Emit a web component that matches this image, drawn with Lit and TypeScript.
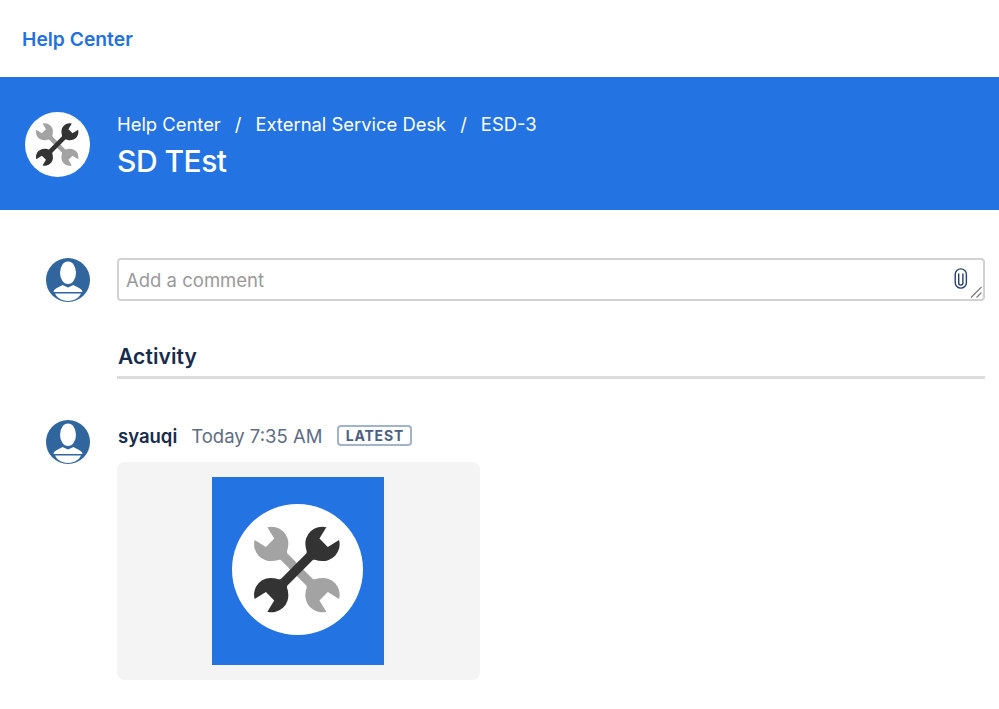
import { LitElement, html, css, svg } from "lit";
import { customElement } from "lit/decorators.js";

const WRENCH = "M-14 -3.6L14 -3.6C16 -4.2 16 -6.5 17.5 -7.8A13 13 0 0 1 39.5 -7L29.5 -4.6L29.5 4.6L39.5 7A13 13 0 0 1 17.5 7.8C16 6.5 16 4.2 14 3.6L-14 3.6C-16 4.2 -16 6.5 -17.5 7.8A13 13 0 0 1 -39.5 7L-29.5 4.6L-29.5 -4.6L-39.5 -7A13 13 0 0 1 -17.5 -7.8C-16 -6.5 -16 -4.2 -14 -3.6Z";

const tools = (cls: string) => html`<svg class=${cls} viewBox="0 0 100 100" aria-hidden="true">
  <circle cx="50" cy="50" r="50" fill="#fff"></circle>
  ${svg`<path d=${WRENCH} fill="#a3a3a3" transform="translate(49.5 50) rotate(45) scale(0.98)"></path>
  <path d=${WRENCH} fill="#333" transform="translate(49.5 50) rotate(-45) scale(0.98)"></path>`}
</svg>`;

const avatar = () => html`<svg class="avatar" viewBox="0 0 44 44" aria-hidden="true">
  <circle cx="22" cy="22" r="22" fill="#30659d"></circle>
  <ellipse cx="22" cy="14.7" rx="8" ry="11.3" fill="#fff"></ellipse>
  <path d="M7.5 34C8 30.5 12 29.5 16.5 27L22 29.5L27.5 27C32 29.5 36 30.5 36.5 34Z" fill="#fff"></path>
  <path d="M9 35.6H35C33 40 28.5 43 22 43C15.5 43 11 40 9 35.6Z" fill="#fff"></path>
</svg>`;

@customElement("app-root")
export class AppRoot extends LitElement {
  static styles = css`
    :host {
      display: block;
      width: 999px;
      height: 709px;
      overflow: hidden;
      background: #fff;
      font-family: Inter, "Liberation Sans", sans-serif;
      color: #172b4d;
    }
    .top {
      height: 77px;
      display: flex;
      align-items: center;
      padding-left: 22px;
      box-sizing: border-box;
    }
    .brand {
      color: #2371e0;
      font-size: 19.3px;
      font-weight: 600;
    }
    .banner {
      height: 133px;
      background: #2473e2;
      display: flex;
      align-items: center;
      padding-left: 25px;
      gap: 27px;
      color: #fff;
      box-sizing: border-box;
    }
    .logo {
      width: 65px;
      height: 65px;
      flex: none;
      margin-top: 2px;
    }
    .text {
      margin-top: 4px;
    }
    .crumbs {
      display: flex;
      font-size: 18.4px;
      line-height: 24px;
      gap: 14px;
    }
    .title {
      font-size: 30px;
      line-height: 38px;
      font-weight: 500;
      letter-spacing: -0.5px;
      margin-top: 6px;
    }
    .main {
      display: grid;
      grid-template-columns: 44px 868px;
      column-gap: 27px;
      padding: 48px 0 0 46px;
    }
    .avatar {
      width: 44px;
      height: 44px;
      display: block;
    }
    .input {
      position: relative;
      height: 43px;
      box-sizing: border-box;
      border: 2px solid #d2d2d2;
      border-radius: 4px;
      display: flex;
      align-items: center;
      padding: 0 7px;
      font-size: 18.5px;
      color: #9a9a9a;
    }
    .clip {
      position: absolute;
      right: 15px;
      top: 8px;
      width: 14px;
      height: 21px;
    }
    .grip {
      position: absolute;
      right: 1px;
      bottom: 1px;
      width: 12px;
      height: 12px;
    }
    .activity {
      grid-column: 2;
      margin-top: 43px;
      height: 34px;
      box-sizing: border-box;
      border-bottom: 3px solid #dcdcdc;
      font-size: 21px;
      font-weight: 600;
      line-height: 24px;
      letter-spacing: 0.1px;
      color: #172b4d;
      padding-left: 1px;
    }
    .entry {
      display: contents;
    }
    .entry .avatar {
      margin-top: 41px;
    }
    .comment {
      margin-top: 46px;
    }
    .meta {
      display: flex;
      align-items: center;
      height: 21px;
      font-size: 18.5px;
    }
    .who {
      font-weight: 600;
      color: #172b4d;
      padding-left: 1px;
    }
    .when {
      color: #5e6c84;
      margin-left: 14px;
    }
    .badge {
      margin-left: 15px;
      box-sizing: border-box;
      width: 75px;
      height: 21px;
      border: 2px solid #a3b3ca;
      border-radius: 4px;
      font-size: 14px;
      font-weight: 700;
      letter-spacing: 0.8px;
      color: #4a5f82;
      display: flex;
      align-items: center;
      justify-content: center;
    }
    .attachment {
      margin-top: 16px;
      width: 363px;
      height: 218px;
      box-sizing: border-box;
      padding-right: 1px;
      background: #f4f4f4;
      border-radius: 8px;
      display: flex;
      align-items: center;
      justify-content: center;
    }
    .thumb {
      width: 172px;
      height: 188px;
      box-sizing: border-box;
      padding: 0 2px 3px 0;
      background: #2473e2;
      display: flex;
      align-items: center;
      justify-content: center;
    }
    .big {
      width: 131px;
      height: 131px;
    }
  `;

  render() {
    return html`
      <div class="top"><span class="brand">Help Center</span></div>
      <div class="banner">
        ${tools("logo")}
        <div class="text">
          <div class="crumbs">
            <span>Help Center</span><span>/</span><span>External Service Desk</span><span>/</span><span>ESD-3</span>
          </div>
          <div class="title">SD TEst</div>
        </div>
      </div>
      <div class="main">
        ${avatar()}
        <div class="input">
          Add a comment
          <svg class="clip" viewBox="0 0 14 21" fill="none" stroke="#253f6e" stroke-width="1.4" stroke-linecap="round">
            <path d="M4.7 6V15A2.1 2.1 0 0 0 8.9 15V6"></path>
            <path d="M1.2 6.5A5.6 5.6 0 0 1 12.4 6.5V14.5A5.6 5.6 0 0 1 1.2 14.5Z"></path>
          </svg>
          <svg class="grip" viewBox="0 0 12 12" fill="none" stroke="#777" stroke-width="1.1">
            <path d="M1 11.5L11.5 1M6.5 11.5L11.5 6.5"></path>
          </svg>
        </div>
        <div class="activity">Activity</div>
        <div class="entry">
          ${avatar()}
          <div class="comment">
            <div class="meta">
              <span class="who">syauqi</span>
              <span class="when">Today 7:35 AM</span>
              <span class="badge">LATEST</span>
            </div>
            <div class="attachment">
              <div class="thumb">${tools("big")}</div>
            </div>
          </div>
        </div>
      </div>
    `;
  }
}
